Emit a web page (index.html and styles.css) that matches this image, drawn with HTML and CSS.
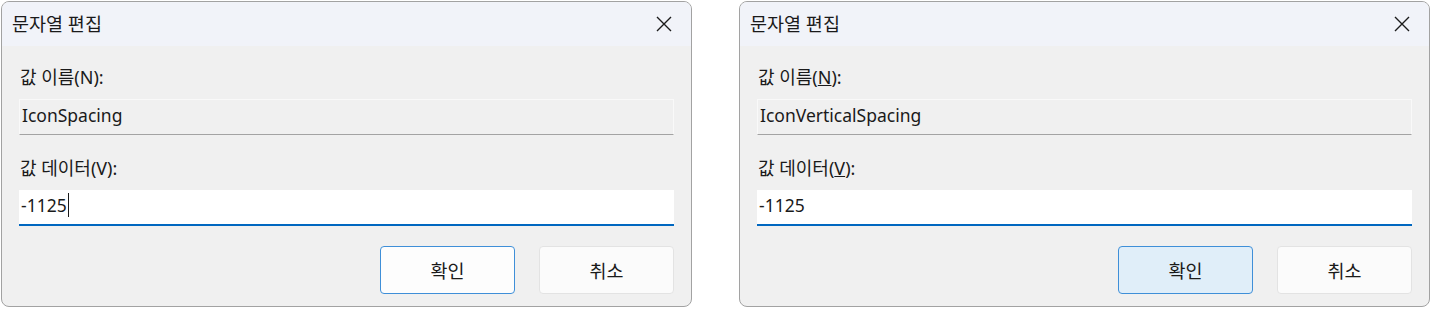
FILE: index.html
```html
<!DOCTYPE html>
<html lang="ko">
<head>
    <meta charset="UTF-8">
    <title>문자열 편집</title>
    <link rel="stylesheet" href="styles.css">
</head>
<body>
    <div class="dialog">
        <div class="title-bar">
            <span class="title">문자열 편집</span>
            <svg class="close" width="16" height="16" viewBox="0 0 16 16">
                <path d="M1 1 L15 15 M15 1 L1 15" stroke="#1b1b1b" stroke-width="1.4" fill="none"/>
            </svg>
        </div>
        <div class="dialog-body">
            <label class="field-label">값 이름(N):</label>
            <div class="field readonly">IconSpacing</div>
            <label class="field-label">값 데이터(V):</label>
            <div class="field editable">-1125<span class="caret"></span></div>
            <div class="buttons">
                <button class="btn default">확인</button>
                <button class="btn">취소</button>
            </div>
        </div>
    </div>

    <div class="dialog">
        <div class="title-bar">
            <span class="title">문자열 편집</span>
            <svg class="close" width="16" height="16" viewBox="0 0 16 16">
                <path d="M1 1 L15 15 M15 1 L1 15" stroke="#1b1b1b" stroke-width="1.4" fill="none"/>
            </svg>
        </div>
        <div class="dialog-body">
            <label class="field-label">값 이름(<u>N</u>):</label>
            <div class="field readonly">IconVerticalSpacing</div>
            <label class="field-label">값 데이터(<u>V</u>):</label>
            <div class="field editable">-1125</div>
            <div class="buttons">
                <button class="btn default hover">확인</button>
                <button class="btn">취소</button>
            </div>
        </div>
    </div>
</body>
</html>
```

FILE: styles.css
```css
* {
    box-sizing: border-box;
    margin: 0;
    padding: 0;
}

body {
    background: #ffffff;
    display: flex;
    gap: 47px;
    padding: 1px 0 0 1px;
    font-family: "Noto Sans", "Noto Sans CJK KR", sans-serif;
    color: #1a1a1a;
}

.dialog {
    flex: none;
    width: 691px;
    height: 306px;
    border: 1px solid #a2a2a2;
    border-radius: 8px;
    overflow: hidden;
    background: #f0f0f0;
    display: flex;
    flex-direction: column;
}

.title-bar {
    height: 44px;
    background: #f1f3f9;
    display: flex;
    align-items: center;
    justify-content: space-between;
    padding: 0 19px 0 10px;
}

.title {
    font-size: 18.5px;
    line-height: 24px;
}

.close {
    display: block;
}

.dialog-body {
    display: flex;
    flex-direction: column;
    padding: 19px 17px 0 17px;
}

.field-label {
    font-size: 18px;
    line-height: 24px;
    padding-left: 1px;
    margin-bottom: 10px;
}

.field {
    height: 36px;
    font-size: 17.5px;
    line-height: 24px;
    padding: 0 0 4px 2px;
    display: flex;
    align-items: center;
}

.field.readonly {
    background: #f0f0f0;
    border: 1px solid #f9f9f9;
    border-bottom: 1px solid #a3a3a3;
    margin-bottom: 21px;
}

.field.editable {
    background: #ffffff;
    border-bottom: 2px solid #0067c0;
    margin-bottom: 20px;
}

.caret {
    display: inline-block;
    width: 1px;
    height: 24px;
    margin-left: 1px;
    background: #1a1a1a;
}

.buttons {
    display: flex;
    justify-content: flex-end;
    gap: 24px;
}

.btn {
    width: 135px;
    height: 48px;
    font-family: "Noto Sans CJK KR", sans-serif;
    font-size: 18.5px;
    color: #1a1a1a;
    background: #fbfbfb;
    border: 1px solid #e3e3e3;
    border-radius: 4px;
}

.btn.default {
    border: 1px solid #3f8fd8;
    background: #fdfdfd;
}

.btn.hover {
    background: #e0eef9;
}
```
